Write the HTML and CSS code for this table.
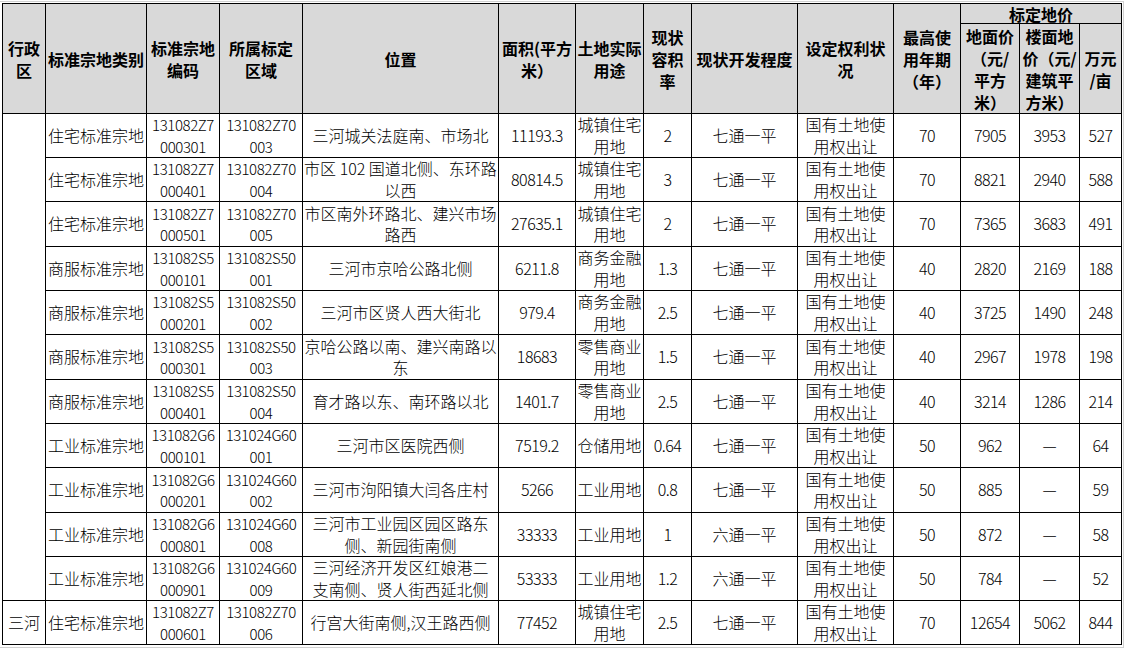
FILE: index.html
```html
<!DOCTYPE html>
<html lang="zh-CN">
<head>
<meta charset="utf-8">
<title>标定地价表</title>
<link rel="stylesheet" href="styles.css">
</head>
<body>
<div class="frame">
<table class="sheet">
  <colgroup>
    <col class="c1"><col class="c2"><col class="c3"><col class="c4"><col class="c5"><col class="c6"><col class="c7"><col class="c8"><col class="c9"><col class="c10"><col class="c11"><col class="c12"><col class="c13"><col class="c14">
  </colgroup>
  <thead>
    <tr class="h1">
      <th rowspan="2">行政<br>区</th>
      <th rowspan="2">标准宗地类别</th>
      <th rowspan="2">标准宗地<br>编码</th>
      <th rowspan="2">所属标定<br>区域</th>
      <th rowspan="2">位置</th>
      <th rowspan="2">面积(平方<br>米）</th>
      <th rowspan="2">土地实际<br>用途</th>
      <th rowspan="2">现状<br>容积<br>率</th>
      <th rowspan="2">现状开发程度</th>
      <th rowspan="2">设定权利状<br>况</th>
      <th rowspan="2">最高使<br>用年期<br>（年）</th>
      <th colspan="3" class="group">标定地价</th>
    </tr>
    <tr class="h2">
      <th>地面价<br>（元/<br>平方<br>米）</th>
      <th>楼面地<br>价（元/<br>建筑平<br>方米）</th>
      <th>万元<br>/亩</th>
    </tr>
  </thead>
  <tbody>
    <tr class="r44">
      <td rowspan="11"></td>
      <td>住宅标准宗地</td><td class="code">131082Z7<br>000301</td><td class="code">131082Z70<br>003</td><td>三河城关法庭南、市场北</td><td class="n">11193.3</td><td>城镇住宅<br>用地</td><td class="n">2</td><td>七通一平</td><td>国有土地使<br>用权出让</td><td class="n">70</td><td class="n">7905</td><td class="n">3953</td><td class="n">527</td>
    </tr>
    <tr class="r44">
      <td>住宅标准宗地</td><td class="code">131082Z7<br>000401</td><td class="code">131082Z70<br>004</td><td>市区 102 国道北侧、东环路<br>以西</td><td class="n">80814.5</td><td>城镇住宅<br>用地</td><td class="n">3</td><td>七通一平</td><td>国有土地使<br>用权出让</td><td class="n">70</td><td class="n">8821</td><td class="n">2940</td><td class="n">588</td>
    </tr>
    <tr class="r45">
      <td>住宅标准宗地</td><td class="code">131082Z7<br>000501</td><td class="code">131082Z70<br>005</td><td>市区南外环路北、建兴市场<br>路西</td><td class="n">27635.1</td><td>城镇住宅<br>用地</td><td class="n">2</td><td>七通一平</td><td>国有土地使<br>用权出让</td><td class="n">70</td><td class="n">7365</td><td class="n">3683</td><td class="n">491</td>
    </tr>
    <tr class="r44">
      <td>商服标准宗地</td><td class="code">131082S5<br>000101</td><td class="code">131082S50<br>001</td><td>三河市京哈公路北侧</td><td class="n">6211.8</td><td>商务金融<br>用地</td><td class="n">1.3</td><td>七通一平</td><td>国有土地使<br>用权出让</td><td class="n">40</td><td class="n">2820</td><td class="n">2169</td><td class="n">188</td>
    </tr>
    <tr class="r44">
      <td>商服标准宗地</td><td class="code">131082S5<br>000201</td><td class="code">131082S50<br>002</td><td>三河市区贤人西大街北</td><td class="n">979.4</td><td>商务金融<br>用地</td><td class="n">2.5</td><td>七通一平</td><td>国有土地使<br>用权出让</td><td class="n">40</td><td class="n">3725</td><td class="n">1490</td><td class="n">248</td>
    </tr>
    <tr class="r45">
      <td>商服标准宗地</td><td class="code">131082S5<br>000301</td><td class="code">131082S50<br>003</td><td>京哈公路以南、建兴南路以<br>东</td><td class="n">18683</td><td>零售商业<br>用地</td><td class="n">1.5</td><td>七通一平</td><td>国有土地使<br>用权出让</td><td class="n">40</td><td class="n">2967</td><td class="n">1978</td><td class="n">198</td>
    </tr>
    <tr class="r44">
      <td>商服标准宗地</td><td class="code">131082S5<br>000401</td><td class="code">131082S50<br>004</td><td>育才路以东、南环路以北</td><td class="n">1401.7</td><td>零售商业<br>用地</td><td class="n">2.5</td><td>七通一平</td><td>国有土地使<br>用权出让</td><td class="n">40</td><td class="n">3214</td><td class="n">1286</td><td class="n">214</td>
    </tr>
    <tr class="r44">
      <td>工业标准宗地</td><td class="code">131082G6<br>000101</td><td class="code">131024G60<br>001</td><td>三河市区医院西侧</td><td class="n">7519.2</td><td>仓储用地</td><td class="n">0.64</td><td>七通一平</td><td>国有土地使<br>用权出让</td><td class="n">50</td><td class="n">962</td><td>—</td><td class="n">64</td>
    </tr>
    <tr class="r45">
      <td>工业标准宗地</td><td class="code">131082G6<br>000201</td><td class="code">131024G60<br>002</td><td>三河市泃阳镇大闫各庄村</td><td class="n">5266</td><td>工业用地</td><td class="n">0.8</td><td>七通一平</td><td>国有土地使<br>用权出让</td><td class="n">50</td><td class="n">885</td><td>—</td><td class="n">59</td>
    </tr>
    <tr class="r44">
      <td>工业标准宗地</td><td class="code">131082G6<br>000801</td><td class="code">131024G60<br>008</td><td>三河市工业园区园区路东<br>侧、新园街南侧</td><td class="n">33333</td><td>工业用地</td><td class="n">1</td><td>六通一平</td><td>国有土地使<br>用权出让</td><td class="n">50</td><td class="n">872</td><td>—</td><td class="n">58</td>
    </tr>
    <tr class="r44">
      <td>工业标准宗地</td><td class="code">131082G6<br>000901</td><td class="code">131024G60<br>009</td><td>三河经济开发区红娘港二<br>支南侧、贤人街西延北侧</td><td class="n">53333</td><td>工业用地</td><td class="n">1.2</td><td>六通一平</td><td>国有土地使<br>用权出让</td><td class="n">50</td><td class="n">784</td><td>—</td><td class="n">52</td>
    </tr>
    <tr class="r44">
      <td>三河</td><td>住宅标准宗地</td><td class="code">131082Z7<br>000601</td><td class="code">131082Z70<br>006</td><td>行宫大街南侧,汉王路西侧</td><td class="n">77452</td><td>城镇住宅<br>用地</td><td class="n">2.5</td><td>七通一平</td><td>国有土地使<br>用权出让</td><td class="n">70</td><td class="n">12654</td><td class="n">5062</td><td class="n">844</td>
    </tr>
  </tbody>
</table>
</div>
</body>
</html>
```
FILE: styles.css
```css
html, body {
  margin: 0;
  padding: 0;
  background: #ffffff;
}

.frame {
  box-sizing: border-box;
  width: 1124px;
  height: 647px;
  margin-top: 1px;
  padding: 1px 0 0 2px;
  border-top: 1px solid #d0d0d0;
  border-right: 1px solid #d0d0d0;
  border-bottom: 1px solid #d0d0d0;
}

.sheet {
  border-collapse: collapse;
  table-layout: fixed;
  width: 1120px;
  font-family: "Noto Sans CJK SC", sans-serif;
  font-size: 16px;
  line-height: 21.5px;
  color: #000000;
}

.c1 { width: 43px; }
.c2 { width: 101px; }
.c3 { width: 73px; }
.c4 { width: 83px; }
.c5 { width: 196px; }
.c6 { width: 77px; }
.c7 { width: 68px; }
.c8 { width: 48px; }
.c9 { width: 106px; }
.c10 { width: 96px; }
.c11 { width: 67px; }
.c12 { width: 59px; }
.c13 { width: 60px; }
.c14 { width: 42px; }

.sheet th,
.sheet td {
  border: 1px solid #000000;
  padding: 0;
  text-align: center;
  vertical-align: middle;
  white-space: nowrap;
  overflow: visible;
}

.sheet td {
  font-weight: 300;
}

.sheet th {
  background: #d9d9d9;
  font-weight: bold;
  line-height: 22px;
}

.h1 { height: 20px; }
.h2 { height: 90px; }

.sheet th.group {
  line-height: 18px;
}

.r44 { height: 44px; }
.r45 { height: 45px; }

.sheet td.n {
  font-size: 16px;
  letter-spacing: -0.5px;
}

.sheet td.code {
  font-size: 15px;
  letter-spacing: -0.4px;
}
```
